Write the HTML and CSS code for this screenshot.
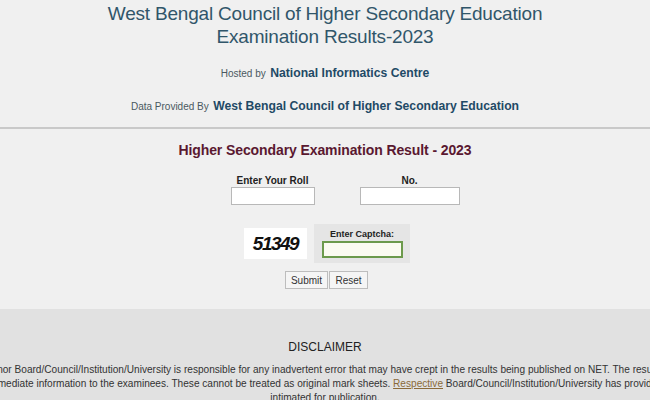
FILE: index.html
```html
<!DOCTYPE html>
<html>
<head>
<meta charset="utf-8">
<title>WBCHSE Results 2023</title>
<link rel="stylesheet" href="styles.css">
</head>
<body>
<header class="top">
  <h1 class="site-title">West Bengal Council of Higher Secondary Education<br>Examination Results-2023</h1>
  <p class="credit credit-host"><span class="credit-label">Hosted by</span> <span class="credit-name">National Informatics Centre</span></p>
  <p class="credit credit-data"><span class="credit-label">Data Provided By</span> <span class="credit-name">West Bengal Council of Higher Secondary Education</span></p>
</header>
<main class="result">
  <h2 class="result-title">Higher Secondary Examination Result - 2023</h2>
  <form class="result-form">
    <div class="roll-row">
      <label class="field field-roll"><span class="field-label">Enter Your Roll</span><input class="text-input roll" type="text"></label>
      <label class="field field-no"><span class="field-label">No.</span><input class="text-input no" type="text"></label>
    </div>
    <div class="captcha-row">
      <div class="captcha-img">51349</div>
      <label class="captcha-box"><span class="captcha-label">Enter Captcha:</span><input class="captcha-input" type="text"></label>
    </div>
    <div class="buttons">
      <button type="button" class="btn btn-submit">Submit</button><button type="button" class="btn btn-reset">Reset</button>
    </div>
  </form>
</main>
<section class="disclaimer">
  <h3 class="disclaimer-title">DISCLAIMER</h3>
  <div class="disclaimer-wrap">
    <p class="disclaimer-text">Neither NIC nor Board/Council/Institution/University is responsible for any inadvertent error that may have crept in the results being published on NET. The results published<br>immediate information to the examinees. These cannot be treated as original mark sheets. <a class="link" href="#">Respective</a> Board/Council/Institution/University has provided<br>intimated for publication.</p>
  </div>
</section>
</body>
</html>
```
FILE: styles.css
```css
html, body {
  margin: 0;
  padding: 0;
}
body {
  background: #f0f0f0;
  font-family: "Liberation Sans", Arial, sans-serif;
  width: 650px;
  height: 400px;
  overflow: hidden;
}
.top {
  text-align: center;
  padding-top: 2px;
  border-bottom: 2px solid #c9c9c9;
  padding-bottom: 13px;
}
.site-title {
  margin: 0;
  font-size: 19px;
  line-height: 23px;
  letter-spacing: -0.2px;
  font-weight: normal;
  color: #30566a;
}
.credit {
  margin: 0;
  line-height: 14px;
}
.credit-host {
  margin-top: 17px;
}
.credit-data {
  margin-top: 17px;
}
.credit-label {
  font-size: 10px;
  color: #4a5860;
}
.credit-name {
  font-size: 12.2px;
  font-weight: bold;
  color: #1f4a66;
}
.result {
  text-align: center;
  height: 180px;
}
.result-title {
  margin: 0;
  padding-top: 13px;
  font-size: 14px;
  line-height: 16px;
  letter-spacing: -0.1px;
  font-weight: bold;
  color: #5a1830;
}
.result-form {
  margin: 0;
}
.roll-row {
  display: flex;
  justify-content: center;
  gap: 45px;
  margin-top: 17px;
  padding-left: 40px;
}
.field {
  display: flex;
  flex-direction: column;
  align-items: center;
}
.field-label {
  font-size: 10px;
  font-weight: bold;
  color: #222;
  line-height: 12px;
}
.text-input {
  box-sizing: border-box;
  height: 18px;
  border: 1px solid #b8b8b8;
  background: #fff;
  margin: 0;
  padding: 0;
}
.roll { width: 84px; }
.no { width: 100px; }
.captcha-row {
  display: flex;
  justify-content: center;
  align-items: center;
  gap: 7px;
  margin-top: 19px;
  padding-left: 4px;
}
.captcha-img {
  width: 63px;
  height: 31px;
  background: #fff;
  font-size: 19px;
  font-weight: bold;
  font-style: italic;
  line-height: 31px;
  color: #111;
  letter-spacing: -1.5px;
  text-align: center;
}
.captcha-box {
  width: 96px;
  height: 39px;
  box-sizing: border-box;
  background: #e5e5e5;
  display: flex;
  flex-direction: column;
  align-items: center;
  padding-top: 5px;
}
.captcha-label {
  font-size: 9px;
  font-weight: bold;
  color: #222;
  line-height: 11px;
}
.captcha-input {
  box-sizing: border-box;
  width: 81px;
  height: 17px;
  margin: 1px 0 0;
  padding: 0;
  border: 2px solid #6c9a4c;
  background: #fbfbf1;
}
.buttons {
  display: flex;
  justify-content: center;
  margin-top: 8px;
  padding-left: 3px;
}
.btn {
  height: 18px;
  box-sizing: border-box;
  border: 1px solid #bdbdbd;
  background: #f5f5f5;
  font-family: "Liberation Sans", Arial, sans-serif;
  font-size: 10px;
  color: #333;
  padding: 0 4px;
  margin: 0;
}
.btn-submit { width: 43px; }
.btn-reset { width: 39px; margin-left: 1px; }
.disclaimer {
  background: #e1e1e1;
  height: 91px;
  text-align: center;
  overflow: hidden;
}
.disclaimer-title {
  margin: 0;
  padding-top: 31px;
  font-size: 12px;
  line-height: 14px;
  font-weight: normal;
  color: #222;
}
.disclaimer-wrap {
  width: 1000px;
  margin-left: -175px;
}
.disclaimer-text {
  margin: 9px 0 0;
  font-size: 10.1px;
  line-height: 14px;
  color: #333;
  white-space: nowrap;
}
.link {
  color: #8a6a3a;
}
```
